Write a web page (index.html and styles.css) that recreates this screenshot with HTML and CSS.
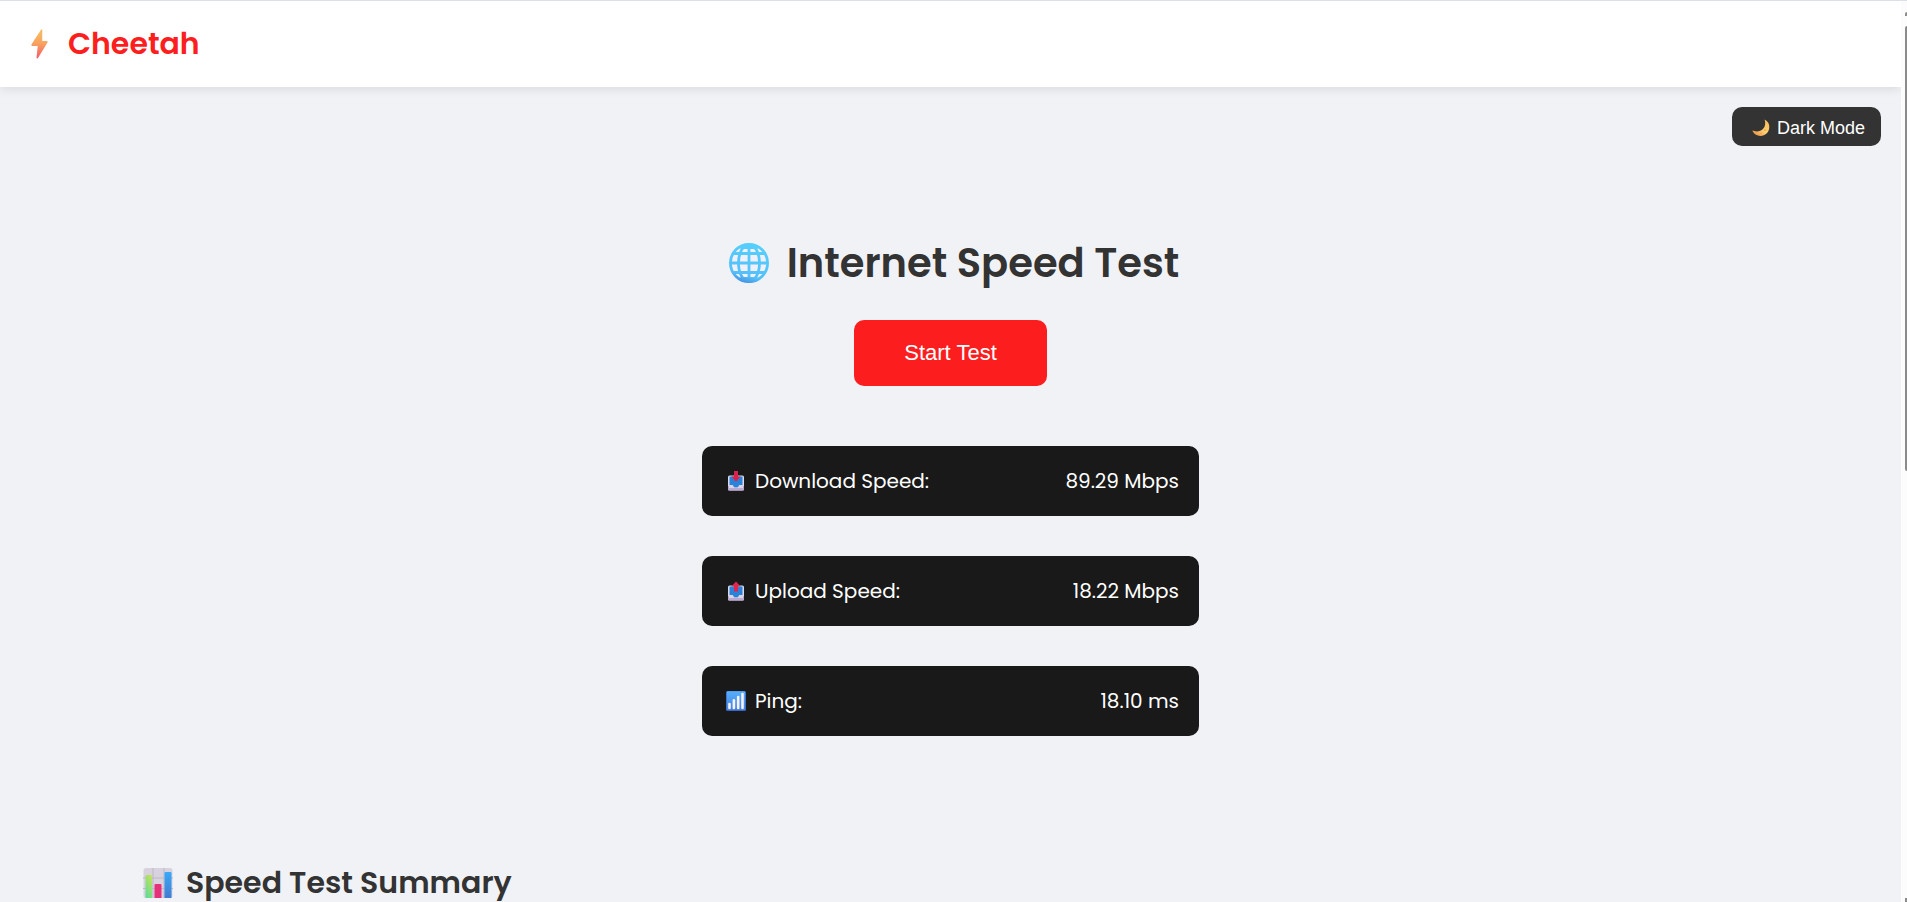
FILE: index.html
```html
<!DOCTYPE html>
<html lang="en">
<head>
<meta charset="utf-8">
<title>Cheetah</title>
<link rel="stylesheet" href="styles.css">
</head>
<body>
<div class="page">
  <header class="navbar">
    <svg class="bolt" viewBox="0 0 17 30" aria-hidden="true">
      <defs><linearGradient id="boltFill" x1="0" y1="0" x2="0" y2="1"><stop offset="0" stop-color="#fcc05c"/><stop offset=".5" stop-color="#f9a05e"/><stop offset="1" stop-color="#f4586a"/></linearGradient></defs>
      <path d="M10 .8Q10.6 0 11.2.5V12H16Q17 12.4 16.5 13.4L7 29Q6 30 5.5 28.8L6.7 17H1Q0 16.6.4 15.6Z" fill="url(#boltFill)"/>
      <path d="M10.6 1V12.4H16" fill="none" stroke="#e7b57c" stroke-width=".8"/>
    </svg>
    <span class="brand">Cheetah</span>
  </header>
  <div class="toolbar">
    <button class="mode" type="button">
      <svg class="moon" viewBox="0 0 18 18" aria-hidden="true">
        <defs><linearGradient id="moonFill" x1="1" y1="0" x2="0" y2="1"><stop offset="0" stop-color="#fbb851"/><stop offset=".5" stop-color="#fdcf72"/><stop offset="1" stop-color="#e8863c"/></linearGradient></defs>
        <path d="M12.6.5C15.8 2 17.6 5 17.3 8.8 16.9 13.5 13.2 17 8.6 17 4.800 17 1.600 15 .4 11.600 4 13 8.600 12.600 11 10 13.400 7.400 13.800 3.800 12.600.5Z" fill="url(#moonFill)"/>
        <circle cx="13" cy="11" r="1.100" fill="#f0a94e"/><circle cx="9" cy="14.500" r=".9" fill="#f0a94e"/>
      </svg>
      <span>Dark Mode</span>
    </button>
  </div>
  <main>
    <section class="test">
      <h1 class="title">
        <svg class="globe" viewBox="0 0 40 40" aria-hidden="true">
          <defs><linearGradient id="globeFill" gradientUnits="userSpaceOnUse" x1="26" y1="0" x2="14" y2="40"><stop offset="0" stop-color="#55d0fd"/><stop offset=".8" stop-color="#55c0fa"/><stop offset="1" stop-color="#4590e0"/></linearGradient></defs>
          <circle cx="20" cy="20" r="18.500" fill="#f1f0f8"/>
          <g fill="none" stroke="url(#globeFill)" stroke-width="2.800">
            <circle cx="20" cy="20" r="18.600"/>
            <ellipse cx="20" cy="20" rx="10.500" ry="18.500"/>
            <path d="M4 10.500H36M4 29.500H36M20 1V39M1 20H39"/>
          </g>
          <path d="M9 5Q20-2 31 5L27 6H13ZM9 35Q20 42 31 35L27 34H13Z" fill="url(#globeFill)"/>
        </svg>
        <span>Internet Speed Test</span>
      </h1>
      <button class="start" type="button">Start Test</button>
      <dl class="results">
        <div class="result">
          <dt>
            <svg class="icon" viewBox="0 0 20 20" aria-hidden="true">
              <rect x="2" y="4.500" width="16" height="15" rx="1.500" fill="#dcd9e8"/><path d="M2 15h16v3.500q0 1-1 1H3q-1 0-1-1Z" fill="#bba9d4"/><path d="M3 14h3.800l1.400 2.300h3.600l1.400-2.300H17v3H3Z" fill="#d9d5e6"/><path d="M3.500 5.500h13V14h-3.300l-1.400 2.200H8.200L6.800 14H3.500Z" fill="#2b83d9"/><path d="M8 0h4v5.500h2.700L10 10.700 5.300 5.500H8Z" fill="#d9234f"/>
            </svg>
            Download Speed:
          </dt>
          <dd>89.29 Mbps</dd>
        </div>
        <div class="result">
          <dt>
            <svg class="icon" viewBox="0 0 20 20" aria-hidden="true">
              <rect x="2" y="4.500" width="16" height="15" rx="1.500" fill="#dcd9e8"/><path d="M2 15h16v3.500q0 1-1 1H3q-1 0-1-1Z" fill="#bba9d4"/><path d="M3 14h3.800l1.400 2.300h3.600l1.400-2.300H17v3H3Z" fill="#d9d5e6"/><path d="M3.500 5.500h13V14h-3.300l-1.400 2.200H8.200L6.800 14H3.500Z" fill="#2b83d9"/><path d="M10 .5 14.700 5.500H12v5H8v-5H5.300Z" fill="#dc2850"/>
            </svg>
            Upload Speed:
          </dt>
          <dd>18.22 Mbps</dd>
        </div>
        <div class="result">
          <dt>
            <svg class="icon" viewBox="0 0 20 20" aria-hidden="true">
              <defs><linearGradient id="signalFill" x1="0" y1="0" x2="0" y2="1"><stop offset="0" stop-color="#55b0fb"/><stop offset="1" stop-color="#467ee0"/></linearGradient></defs>
              <rect width="20" height="20" rx="1.500" fill="#3c68c4"/><rect x=".8" y=".3" width="18.400" height="18.700" rx="1" fill="url(#signalFill)"/>
              <path d="M3.500 13v4M7.900 9.300v7.700M12.200 6v11M16.500 3v14" stroke="#f5f2fb" stroke-width="2.600" stroke-linecap="round"/>
            </svg>
            Ping:
          </dt>
          <dd>18.10 ms</dd>
        </div>
      </dl>
    </section>
    <section class="summary">
      <h2 class="subtitle">
        <svg class="chart" viewBox="0 0 30 30" aria-hidden="true">
          <defs>
            <linearGradient id="barGreen" x1=".8" y1="0" x2=".3" y2="1"><stop offset="0" stop-color="#c2e35a"/><stop offset="1" stop-color="#62dc94"/></linearGradient>
            <linearGradient id="barBlue" x1="0" y1="0" x2="0" y2="1"><stop offset="0" stop-color="#38aaf8"/><stop offset="1" stop-color="#437bd2"/></linearGradient>
          </defs>
          <rect x=".5" width="29" height="30" rx="2.500" fill="#d8d2df"/>
          <path d="M10 0v30M21 0v30M0 10h30M0 20.500h30" stroke="#bdb7c6" stroke-width="1"/>
          <path d="M2.500 30V8q0-1 1-1H8q1 0 1 1v22Z" fill="url(#barGreen)"/>
          <path d="M11.500 30V17q0-1 1-1H17.500q1 0 1 1v13Z" fill="#e5317a"/>
          <path d="M21.500 30V5q0-1 1-1H27.500q1 0 1 1v25Z" fill="url(#barBlue)"/>
        </svg>
        <span>Speed Test Summary</span>
      </h2>
    </section>
  </main>
</div>
<div class="scroll" aria-hidden="true"><span class="arrow"></span><span class="thumb"></span><span class="end"></span></div>
</body>
</html>
```
FILE: styles.css
```css
* { box-sizing: border-box; }
body {
  margin: 0;
  height: 100vh;
  display: flex;
  overflow: hidden;
  border-top: 1px solid #d9e0ea;
  background: #f0f2f6;
  color: #333;
  font-family: Poppins, Inter, sans-serif;
}
svg { display: block; flex: none; overflow: visible; }
.page { flex: 1; min-width: 0; }
.navbar {
  display: flex;
  align-items: center;
  gap: 20px;
  height: 86px;
  padding: 0 31px;
  background: #fff;
  box-shadow: 0 2px 10px rgba(0, 0, 0, .1);
}
.bolt { width: 17px; height: 30px; }
.brand { color: #fd1e20; font-size: 30px; font-weight: 600; line-height: 40px; }
.toolbar { display: flex; justify-content: flex-end; padding: 20px 20px 0; }
button {
  border: 0;
  border-radius: 10px;
  color: #fff;
  font-family: "Liberation Sans", sans-serif;
}
.mode {
  display: flex;
  align-items: center;
  gap: 7px;
  height: 39px;
  padding: 3px 16px 0 20px;
  background: #333;
  font-size: 18px;
}
.moon { width: 18px; height: 18px; }
.test {
  display: flex;
  flex-direction: column;
  align-items: center;
  padding-top: 87px;
}
.title, .subtitle { display: flex; align-items: center; margin: 0; font-weight: 600; }
.title { gap: 18px; height: 60px; padding-left: 7px; font-size: 40px; }
.globe { width: 40px; height: 40px; }
.start {
  height: 66px;
  margin-top: 27px;
  padding: 0 50px;
  background: #fc1e1f;
  font-size: 22px;
}
.results {
  display: flex;
  flex-direction: column;
  gap: 40px;
  width: 497px;
  max-width: 100%;
  margin: 60px 0 0;
}
.result {
  display: flex;
  align-items: center;
  justify-content: space-between;
  height: 70px;
  padding: 0 20px 0 24px;
  border-radius: 10px;
  background: #191919;
  color: #fff;
  font-size: 20px;
}
dt { display: flex; align-items: center; gap: 9px; }
dd { margin: 0; }
.icon { width: 20px; height: 20px; }
.summary { padding: 123px 143px 0; }
.subtitle { gap: 13px; height: 48px; font-size: 30px; white-space: nowrap; }
.chart { width: 30px; height: 30px; }
.scroll {
  display: flex;
  flex-direction: column;
  align-items: flex-end;
  width: 6px;
  padding-top: 11px;
  background: #fcfcfc;
}
.arrow { width: 2px; height: 4px; background: #8b8b8b; border-radius: 2px 0 0; }
.thumb { width: 2px; height: 50%; margin-top: 10px; background: #8b8b8b; border-radius: 2px 0 0 2px; }
.end { width: 2px; height: 4px; margin-top: auto; background: #8b8b8b; }
```
